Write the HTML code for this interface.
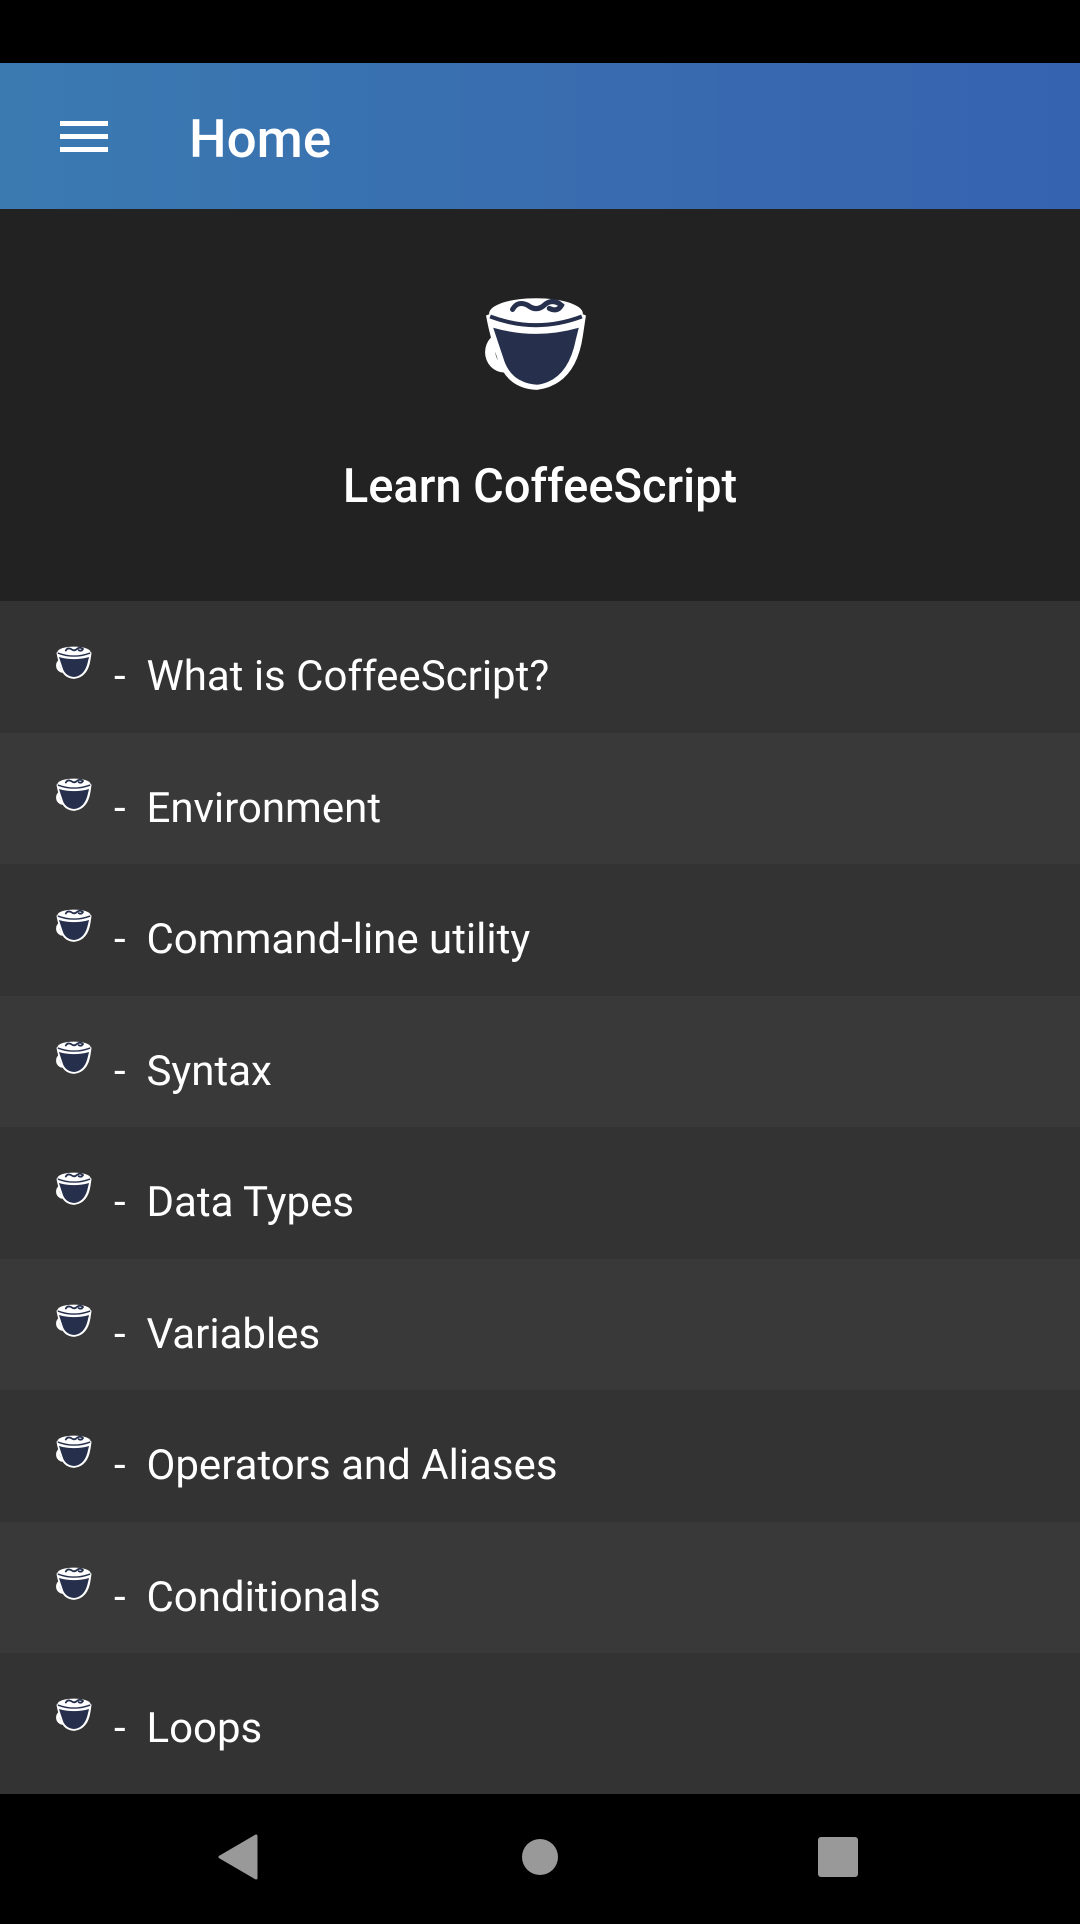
<!DOCTYPE html>
<html><head><meta charset="utf-8"><style>
*{margin:0;padding:0;box-sizing:border-box}
body{width:1080px;height:1920px;background:#000;font-family:"Roboto","Liberation Sans",sans-serif;overflow:hidden;position:relative;color:#fff}
.status{position:absolute;top:0;left:0;width:1080px;height:63px;background:#000}
.bar{position:absolute;top:63px;left:0;width:1080px;height:146px;background:linear-gradient(90deg,#3a7ab1,#3866af 80%,#3563b0)}
.ham{position:absolute;left:60px;width:48px;height:5px;background:#fff}
.title{position:absolute;left:189px;top:46px;font-size:53px;font-weight:500;line-height:60px}
.head{position:absolute;top:209px;left:0;width:1080px;height:392px;background:#222}
.head .t{position:absolute;top:250px;left:0;width:1080px;text-align:center;font-size:47px;font-weight:500;line-height:56px}
.row{position:absolute;left:0;width:1080px;height:131.5px}
.row svg{position:absolute;left:55px;top:43px}
.row span{position:absolute;left:114px;top:51px;font-size:42px;line-height:50px}
.nav{position:absolute;top:1794px;left:0;width:1080px;height:126px;background:#000}
</style></head><body>
<svg width="0" height="0" style="position:absolute"><defs>
<g id="cup">
<ellipse cx="22" cy="58" rx="19" ry="20" fill="#fff"/>
<ellipse cx="25" cy="57" rx="12" ry="14" fill="var(--bg)"/>
<path d="M4 22 Q53 0 102 22 L99 42 Q92 90 54 95 Q24 94 15 64 Q7 40 4 22Z" fill="#fff"/>
<path d="M11 34 Q53 46 95 34 L92 46 Q84 86 54 90 Q28 88 21 64 Q15 46 11 34Z" fill="#26304c"/>
<ellipse cx="53" cy="20" rx="46" ry="15" fill="#fff"/>
<path d="M8 23 Q53 40 98 23" fill="none" stroke="#26304c" stroke-width="4"/>
<path d="M30 16 Q35 7 45 12 Q54 19 62 11 Q70 5 78 12 Q74 19 66 15" fill="none" stroke="#26304c" stroke-width="5" stroke-linecap="round"/>
</g></defs></svg>
<div class="status"></div>
<div class="bar">
<div class="ham" style="top:58px"></div><div class="ham" style="top:71px"></div><div class="ham" style="top:84px"></div>
<div class="title">Home</div>
</div>
<div class="head" style="--bg:#222">
<svg style="position:absolute;left:482px;top:84px" width="108" height="98" viewBox="0 0 106 96"><use href="#cup"/></svg>
<div class="t">Learn CoffeeScript</div>
</div>
<div style="position:absolute;top:601px;left:0">
<div class="row" style="top:0;background:#333;--bg:#333"><svg width="38" height="36" viewBox="0 0 106 96"><use href="#cup"/></svg><span>-&nbsp; What is CoffeeScript?</span></div>
<div class="row" style="top:131.5px;background:#393939;--bg:#393939"><svg width="38" height="36" viewBox="0 0 106 96"><use href="#cup"/></svg><span>-&nbsp; Environment</span></div>
<div class="row" style="top:263px;background:#333;--bg:#333"><svg width="38" height="36" viewBox="0 0 106 96"><use href="#cup"/></svg><span>-&nbsp; Command-line utility</span></div>
<div class="row" style="top:394.5px;background:#393939;--bg:#393939"><svg width="38" height="36" viewBox="0 0 106 96"><use href="#cup"/></svg><span>-&nbsp; Syntax</span></div>
<div class="row" style="top:526px;background:#333;--bg:#333"><svg width="38" height="36" viewBox="0 0 106 96"><use href="#cup"/></svg><span>-&nbsp; Data Types</span></div>
<div class="row" style="top:657.5px;background:#393939;--bg:#393939"><svg width="38" height="36" viewBox="0 0 106 96"><use href="#cup"/></svg><span>-&nbsp; Variables</span></div>
<div class="row" style="top:789px;background:#333;--bg:#333"><svg width="38" height="36" viewBox="0 0 106 96"><use href="#cup"/></svg><span>-&nbsp; Operators and Aliases</span></div>
<div class="row" style="top:920.5px;background:#393939;--bg:#393939"><svg width="38" height="36" viewBox="0 0 106 96"><use href="#cup"/></svg><span>-&nbsp; Conditionals</span></div>
<div class="row" style="top:1052px;height:142px;background:#333;--bg:#333"><svg width="38" height="36" viewBox="0 0 106 96"><use href="#cup"/></svg><span>-&nbsp; Loops</span></div>
</div>
<div class="nav">
<svg width="1080" height="126">
<path d="M256 42 L256 84 L220 63Z" fill="#999" stroke="#999" stroke-width="3" stroke-linejoin="round"/>
<ellipse cx="540" cy="63" rx="18" ry="18" fill="#999"/>
<rect x="818" y="43" width="40" height="40" rx="3" fill="#999"/>
</svg>
</div>
</body></html>
